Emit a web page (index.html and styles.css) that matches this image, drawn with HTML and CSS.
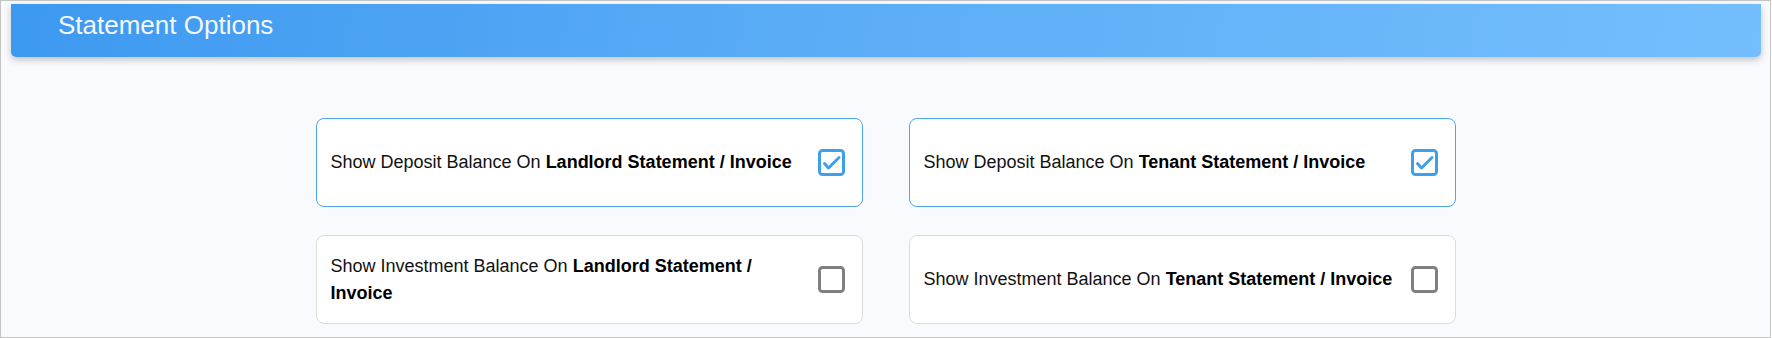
FILE: index.html
```html
<!DOCTYPE html>
<html>
<head>
<title>Statement Options</title>
<link rel="stylesheet" href="styles.css">
</head>
<body>
<div class="frame">
    <div class="panelHead">Statement Options</div>
    <div class="optGrid">
        <div class="optCard on">
            <span class="optText">Show Deposit Balance On <b>Landlord Statement / Invoice</b></span>
            <svg class="tick" width="27" height="27" viewBox="0 0 27 27">
                <rect x="1.5" y="1.5" width="24" height="24" rx="3" fill="#fff" stroke="#3fa0ea" stroke-width="3"/>
                <polyline points="6.5,14.5 10.5,19 21,8.5" fill="none" stroke="#3fa0ea" stroke-width="3" stroke-linecap="round" stroke-linejoin="round"/>
            </svg>
        </div>
        <div class="optCard on">
            <span class="optText">Show Deposit Balance On <b>Tenant Statement / Invoice</b></span>
            <svg class="tick" width="27" height="27" viewBox="0 0 27 27">
                <rect x="1.5" y="1.5" width="24" height="24" rx="3" fill="#fff" stroke="#3fa0ea" stroke-width="3"/>
                <polyline points="6.5,14.5 10.5,19 21,8.5" fill="none" stroke="#3fa0ea" stroke-width="3" stroke-linecap="round" stroke-linejoin="round"/>
            </svg>
        </div>
        <div class="optCard">
            <span class="optText">Show Investment Balance On <b>Landlord Statement / Invoice</b></span>
            <svg class="tick" width="27" height="27" viewBox="0 0 27 27">
                <rect x="1.5" y="1.5" width="24" height="24" rx="3" fill="#fff" stroke="#808080" stroke-width="3"/>
            </svg>
        </div>
        <div class="optCard">
            <span class="optText">Show Investment Balance On <b>Tenant Statement / Invoice</b></span>
            <svg class="tick" width="27" height="27" viewBox="0 0 27 27">
                <rect x="1.5" y="1.5" width="24" height="24" rx="3" fill="#fff" stroke="#808080" stroke-width="3"/>
            </svg>
        </div>
    </div>
</div>
</body>
</html>
```

FILE: styles.css
```css
body {
    margin: 0;
    background-color: #fff;
    font-family: "Liberation Sans", Arial, Helvetica, sans-serif;
}
.frame {
    box-sizing: border-box;
    width: 1771px;
    height: 338px;
    border: 1px solid #c4c4c4;
    background-color: #f8fafd;
    overflow: hidden;
}
.panelHead {
    box-sizing: border-box;
    height: 53px;
    margin: 3px 9px 0px 10px;
    padding: 6px 0px 0px 47px;
    font-size: 26px;
    line-height: 30px;
    color: #f4f8ff;
    background: linear-gradient(100deg, #3d99f0 0%, #5aacf6 45%, #74befd 100%);
    border-radius: 0px 0px 5px 5px;
    box-shadow: 0px 3px 7px rgba(0, 0, 0, 0.22);
}
.optGrid {
    width: 1140px;
    margin: 61px auto 0px auto;
    display: grid;
    grid-template-columns: 1fr 1fr;
    column-gap: 46px;
    row-gap: 28px;
}
.optCard {
    box-sizing: border-box;
    height: 89px;
    display: flex;
    align-items: center;
    gap: 12px;
    padding: 0px 17px 0px 14px;
    background-color: #fff;
    border: 1px solid #dcdcdc;
    border-radius: 8px;
}
.optCard.on {
    border-color: #4ca7ec;
}
.optText {
    flex: 1;
    font-size: 18px;
    line-height: 27px;
    color: #111;
}
.optText b {
    color: #000;
}
.tick {
    flex: none;
    display: block;
}
```
